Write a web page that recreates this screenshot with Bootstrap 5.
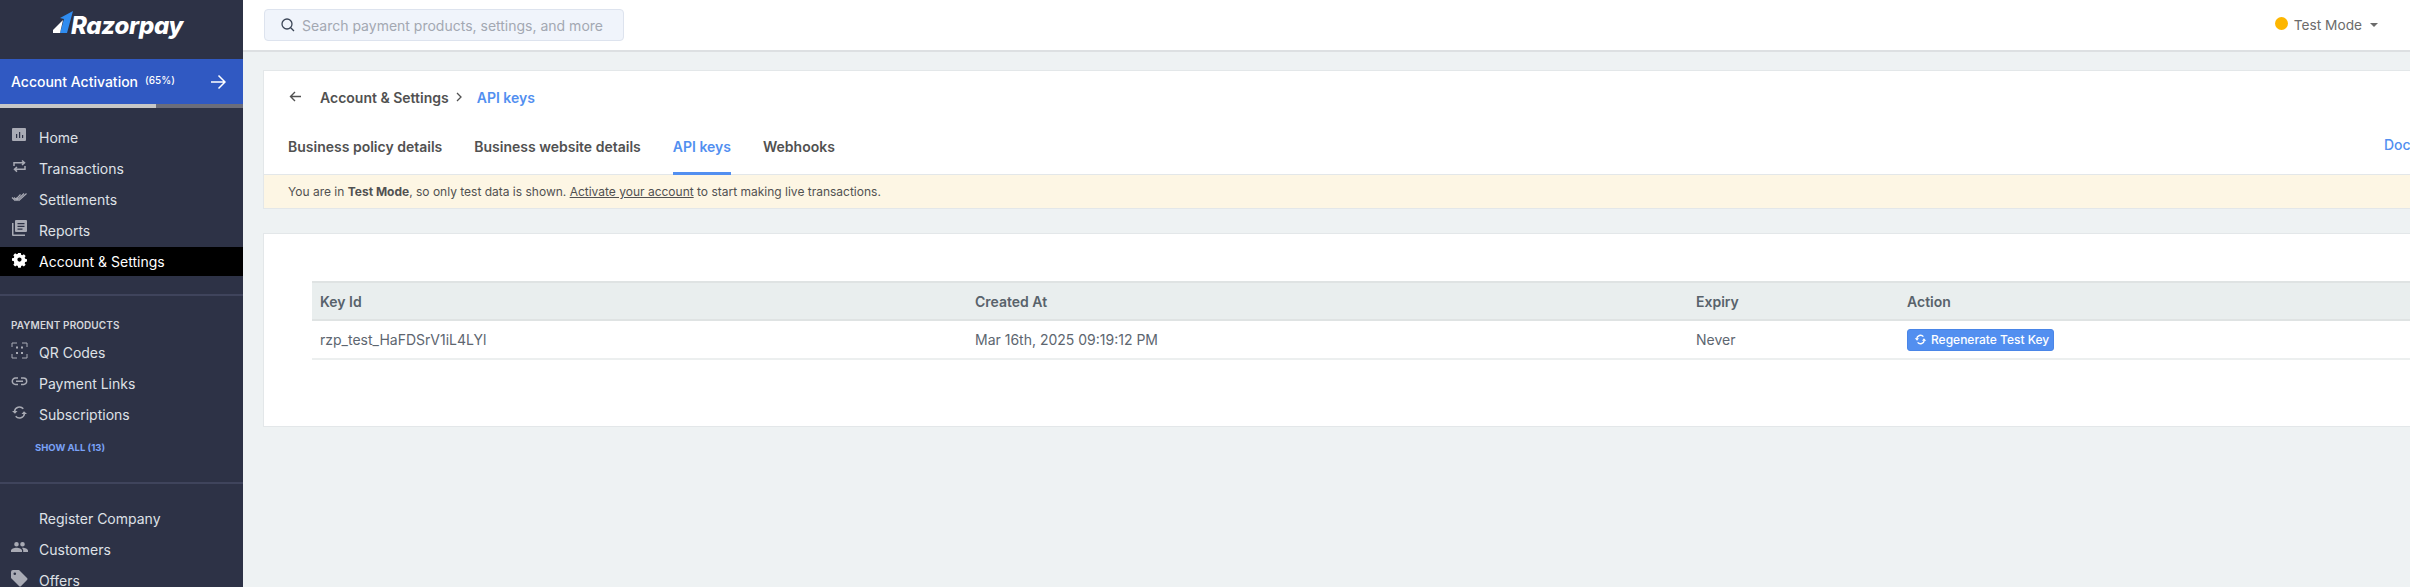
<!DOCTYPE html>
<html lang="en">
<head>
<meta charset="utf-8">
<title>API keys</title>
<link rel="stylesheet" href="https://cdn.jsdelivr.net/npm/bootstrap@5.3.0/dist/css/bootstrap.min.css">
<style>
html,body{height:587px;overflow:hidden}
body{font-family:Inter,"Noto Sans",sans-serif;font-size:14px;background:#eef2f3;color:#515151}
.shell{height:587px}
.side{width:243px;flex:0 0 243px;background:#2d3246;overflow:hidden;color:#dfe1e6}
.side>*{flex-shrink:0}
.brand{height:59px;padding-left:53px;padding-top:9px}
.brand-mark{width:20px;height:25px;margin-right:-2px}
.brand-name{font-size:24px;font-weight:800;font-style:italic;color:#fff;letter-spacing:-.3px;line-height:33px}
.activate{height:45px;background:#3059c2;color:#fff;padding:0 17px 0 11px;font-size:14px;font-weight:500}
.activate-pct{font-size:10px;margin-left:7px;margin-top:-3px}
.meter{height:4px;background:#6b6d7a}
.meter-fill{height:4px;width:156px;background:#c7c7c7}
.menu{padding-top:14px}
.menu-item{height:31px;padding-left:11px;color:#dfe1e6;text-decoration:none;font-size:14px;font-weight:400}
.menu-item svg{width:17px;height:17px;flex:0 0 17px;margin-right:11px;margin-top:-4px;color:#a9abb5}
.menu-item.on{background:#000;color:#fff;height:29px;margin-top:1px}
.menu-item.on svg{color:#fff}
.rule{height:2px;background:#3f445c;border:0;margin:0;opacity:1}
.rule-a{margin-top:18px}
.cap{font-size:10px;font-weight:600;color:#d5d6db;letter-spacing:.1px;padding-left:11px;margin-top:22px;height:14px;line-height:14px;margin-bottom:5px}
.more{font-size:9.5px;font-weight:700;color:#7aa2f7;padding-left:35px;text-decoration:none;display:block;margin-top:11px;line-height:14px}
.rule-b{margin-top:27px}
.menu-c{padding-top:19px}
.pane{min-width:0;overflow:hidden}
.topbar{height:52px;background:#fff;border-bottom:2px solid #dde0e2;padding:0 32px 0 21px}
.finder{width:360px;height:32px;background:#f0f4fb;border:1px solid #dde3ee;border-radius:4px;padding:0 0 0 16px}
.finder svg{width:14px;height:14px;flex:0 0 14px;margin-right:7px}
.finder input{border:0;background:transparent;padding:0;font-size:14px;width:320px;outline:0;font-family:inherit}
.finder input::placeholder{color:#a3a8b2}
.mode{color:#6b6b6b;font-size:13.7px}
.mode-dot{width:13px;height:13px;border-radius:50%;background:#fdb600;margin-right:6px;margin-top:-2px}
.mode-caret{width:0;height:0;border-left:4px solid transparent;border-right:4px solid transparent;border-top:4px solid #6b6b6b;margin-left:8px}
.body-wrap{padding:18px 0 0 20px}
.sheet{width:2300px;background:#fff;border:1px solid #e3e7e9}
.crumbs{height:53px;padding:0 0 0 25px;margin:0;font-weight:600;font-size:14px;color:#515151}
.crumbs svg{width:13px;height:13px;flex:0 0 13px}
.crumbs .to-left{margin-right:18px;margin-top:-2px}
.crumbs .sep{width:10px;height:10px;flex:0 0 10px;margin:0 13px 0 5px;margin-top:-2px}
.crumb-now{color:#528ff0}
.tabbar{height:50px;padding-left:24px;gap:32px;width:2222px}
.tabbar-wide{border-bottom:1px solid #e3e7e9}
.tab-link{display:block;height:51px;line-height:46px;font-weight:600;font-size:14px;color:#515151;text-decoration:none;padding:0}
.tab-link.on{color:#528ff0;border-bottom:3px solid #528ff0}
.docs{color:#528ff0;font-size:14px;font-weight:500;text-decoration:none;line-height:41px}
.notice{height:33px;background:#fdf6e4;padding-left:24px;font-size:12px;color:#515151;line-height:33px}
.notice a{color:#515151}
.sheet-b{margin-top:24px;height:194px;padding:47px 0 0 48px}
.keys{width:2240px;table-layout:fixed;margin:0;font-size:14px;color:#5d6670;--bs-table-bg:transparent}
.keys .c1{width:655px}.keys .c2{width:721px}.keys .c3{width:211px}
.keys th{background:#e9eeee;font-weight:600;color:#58626b;height:38px;padding:0 8px;border-top:2px solid #dfe3e3;border-bottom:2px solid #dfe3e3;vertical-align:middle}
.keys td{height:39px;padding:0 8px 1px;border-bottom:2px solid #ecefef;vertical-align:middle;color:#5d6670}
.regen{background:#528ff0;border:1px solid #4a86e8;color:#fff;font-size:12px;font-weight:500;height:22px;padding:0 4px 0 6px;border-radius:3px;line-height:1}
.regen svg{width:13px;height:13px;margin-right:4px}
</style>
</head>
<body>
<div class="shell d-flex">
  <aside class="side d-flex flex-column">
    <div class="brand d-flex align-items-start">
      <svg class="brand-mark" viewBox="0 0 20 25"><path d="M7 24 L11 10 L7 9 L20 2 L14 24Z" fill="#2f8cf0"/><path d="M0 24 V21 L10 11 L7 24Z" fill="#fff"/></svg>
      <span class="brand-name">Razorpay</span>
    </div>
    <div class="activate d-flex align-items-center">
      <span>Account Activation</span><span class="activate-pct">(65%)</span>
      <svg class="ms-auto" width="16" height="16" viewBox="0 0 16 16" fill="none" stroke="#fff" stroke-width="1.5"><path d="M1 8H15M8.500 1.500 15 8l-6.500 6.500"/></svg>
    </div>
    <div class="meter"><div class="meter-fill"></div></div>
    <nav class="menu d-flex flex-column">
      <a class="menu-item d-flex align-items-center" href="#"><svg viewBox="0 0 17 17" fill="currentColor"><path fill-rule="evenodd" d="M2 1h12a1 1 0 0 1 1 1v11a1 1 0 0 1-1 1H2a1 1 0 0 1-1-1V2a1 1 0 0 1 1-1ZM5 7v4h1.200V7Zm3-2v6h1.200V5Zm3 3v3h1.200V8Z"/></svg>Home</a>
      <a class="menu-item d-flex align-items-center" href="#"><svg viewBox="0 0 17 17" fill="none"><path d="M3 8V4.800h10M11 2.500 13.500 4.800 11 7M14 8v3.300H4M6 9 3.500 11.300 6 13.600" stroke="currentColor" stroke-width="1.500"/></svg>Transactions</a>
      <a class="menu-item d-flex align-items-center" href="#"><svg viewBox="0 0 17 17" fill="none" stroke="currentColor" stroke-width="1.200"><path d="M1 8.500 4 11.500 9.500 5.500M5.500 8.500 8 11.500 15.500 4.500M3 8.500 6 11.500 13 4.500"/></svg>Settlements</a>
      <a class="menu-item d-flex align-items-center" href="#"><svg viewBox="0 0 17 17" fill="currentColor"><path fill-rule="evenodd" d="M5 0h10a1 1 0 0 1 1 1v10a1 1 0 0 1-1 1H5a1 1 0 0 1-1-1V1a1 1 0 0 1 1-1Zm1.500 3v1.300h7V3Zm0 2.800v1.300h7V5.800Zm0 2.700v1.300h5V8.500ZM1 3h1.500v11.500H14V16H2a1 1 0 0 1-1-1Z"/></svg>Reports</a>
      <a class="menu-item on d-flex align-items-center" href="#"><svg viewBox="0 0 17 17" fill="currentColor"><path fill-rule="evenodd" d="M7 1h3l.4 2 1.300.6 1.800-1.100 2 2.100-1.100 1.700.6 1.400 2 .4v2.800l-2 .4-.6 1.400 1.100 1.700-2 2.100-1.800-1.100-1.300.6-.4 2H7l-.4-2-1.300-.6-1.800 1.100-2-2.100 1.100-1.700L2 10.300l-2-.4V7.100l2-.4.6-1.400-1.100-1.700 2-2.100 1.800 1.100 1.300-.6ZM8.500 6.200a2.400 2.400 0 1 0 0 4.800 2.400 2.400 0 0 0 0-4.800Z" transform="translate(1 1) scale(.88)"/></svg>Account &amp; Settings</a>
    </nav>
    <hr class="rule rule-a">
    <div class="cap">PAYMENT PRODUCTS</div>
    <nav class="d-flex flex-column">
      <a class="menu-item d-flex align-items-center" href="#"><svg viewBox="0 0 17 17" fill="none"><path d="M1 5V1h5M11 1h5v4M16 12v4h-5M6 16H1v-4" stroke="currentColor" stroke-width="1"/><path d="M5 4.500h2v2H5ZM10 4.500h2v2h-2ZM5 10h2v2H5ZM10 10h2v2h-2Z" fill="currentColor"/></svg>QR Codes</a>
      <a class="menu-item d-flex align-items-center" href="#"><svg viewBox="0 0 17 17" fill="none"><path d="M7 5H4.500a3.200 3.200 0 0 0 0 6.400H7M10 5h2.500a3.200 3.200 0 0 1 0 6.400H10M5 8.200h7" stroke="currentColor" stroke-width="1.500"/></svg>Payment Links</a>
      <a class="menu-item d-flex align-items-center" href="#"><svg viewBox="0 0 17 17" fill="none"><path d="M3.500 7.500a5 5 0 0 1 8.800-2.700M13.500 9.500a5 5 0 0 1-8.800 2.700" stroke="currentColor" stroke-width="1.500"/><path d="M1 7l3 2.800L6.500 7ZM16 10l-3-2.800L10.500 10Z" fill="currentColor"/></svg>Subscriptions</a>
    </nav>
    <a class="more" href="#">SHOW ALL (13)</a>
    <hr class="rule rule-b">
    <nav class="menu-c d-flex flex-column">
      <a class="menu-item d-flex align-items-center" href="#"><svg viewBox="0 0 17 17"></svg>Register Company</a>
      <a class="menu-item d-flex align-items-center" href="#"><svg viewBox="0 0 17 17" fill="currentColor"><path d="M5.500 3a2.300 2.300 0 1 1 0 4.600 2.300 2.300 0 0 1 0-4.600Zm6 0a2.300 2.300 0 1 1 0 4.600 2.300 2.300 0 0 1 0-4.600ZM0 13v-1.500C0 10 3 8.800 5.500 8.800S11 10 11 11.500V13Zm12.200 0v-1.500c0-1-.5-1.900-1.300-2.600.3 0 .5-.1.800-.1 2.300 0 5.300 1.200 5.300 2.700V13Z"/></svg>Customers</a>
      <a class="menu-item d-flex align-items-center" href="#"><svg viewBox="0 0 17 17" fill="currentColor"><path fill-rule="evenodd" d="M2 0h6l8 8a1.500 1.500 0 0 1 0 2.100L10.100 16a1.500 1.500 0 0 1-2.100 0L0 8V2a2 2 0 0 1 2-2Zm1.800 2.500a1.300 1.300 0 1 0 0 2.600 1.300 1.300 0 0 0 0-2.600Z"/></svg>Offers</a>
    </nav>
  </aside>
  <main class="pane flex-grow-1">
    <header class="topbar d-flex align-items-center justify-content-between">
      <label class="finder d-flex align-items-center mb-0">
        <svg viewBox="0 0 14 14" fill="none" stroke="#3b4556" stroke-width="1.300"><circle cx="6" cy="6" r="5"/><path d="M9.700 9.700 13 13"/></svg>
        <input type="text" placeholder="Search payment products, settings, and more" aria-label="Search">
      </label>
      <div class="mode d-flex align-items-center">
        <span class="mode-dot"></span><span>Test Mode</span><span class="mode-caret"></span>
      </div>
    </header>
    <div class="body-wrap">
      <section class="sheet">
        <div class="crumbs d-flex align-items-center">
          <svg class="to-left" viewBox="0 0 13 13" fill="none" stroke="#515151" stroke-width="1.400"><path d="M12 6.500H1.500M6 2 1.500 6.500 6 11"/></svg>
          <span>Account &amp; Settings</span>
          <svg class="sep" viewBox="0 0 10 10" fill="none" stroke="#515151" stroke-width="1.300"><path d="M3 1l4 4-4 4"/></svg>
          <span class="crumb-now">API keys</span>
        </div>
        <div class="tabbar-wide">
          <nav class="tabbar d-flex">
            <a class="tab-link" href="#">Business policy details</a>
            <a class="tab-link" href="#">Business website details</a>
            <a class="tab-link on" href="#">API keys</a>
            <a class="tab-link" href="#">Webhooks</a>
            <a class="docs ms-auto" href="#">Documentation</a>
          </nav>
        </div>
        <div class="notice">You are in <strong>Test Mode</strong>, so only test data is shown. <a href="#">Activate your account</a> to start making live transactions.</div>
      </section>
      <section class="sheet sheet-b">
        <table class="table keys">
          <colgroup><col class="c1"><col class="c2"><col class="c3"><col></colgroup>
          <thead><tr><th>Key Id</th><th>Created At</th><th>Expiry</th><th>Action</th></tr></thead>
          <tbody><tr><td>rzp_test_HaFDSrV1iL4LYl</td><td>Mar 16th, 2025 09:19:12 PM</td><td>Never</td>
            <td><button class="btn regen d-inline-flex align-items-center" type="button"><svg viewBox="0 0 17 17" fill="none"><path d="M3.500 7.500a5 5 0 0 1 8.800-2.700M13.500 9.500a5 5 0 0 1-8.800 2.700" stroke="#fff" stroke-width="1.800"/><path d="M1 7l3 3 2.500-3ZM16 10l-3-3-2.500 3Z" fill="#fff"/></svg>Regenerate Test Key</button></td></tr></tbody>
        </table>
      </section>
    </div>
  </main>
</div>
<script src="https://cdn.jsdelivr.net/npm/bootstrap@5.3.0/dist/js/bootstrap.bundle.min.js"></script>
</body>
</html>
